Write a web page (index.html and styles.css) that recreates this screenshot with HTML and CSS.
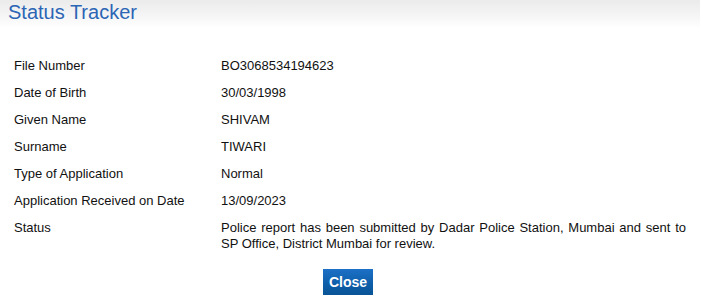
FILE: index.html
```html
<!DOCTYPE html>
<html>
<head>
<meta charset="utf-8">
<link rel="stylesheet" href="styles.css">
</head>
<body>
<div class="header"><h1 class="title">Status Tracker</h1></div>
<div class="details">
  <div class="label">File Number</div><div class="value">BO3068534194623</div>
  <div class="label">Date of Birth</div><div class="value">30/03/1998</div>
  <div class="label">Given Name</div><div class="value">SHIVAM</div>
  <div class="label">Surname</div><div class="value">TIWARI</div>
  <div class="label">Type of Application</div><div class="value">Normal</div>
  <div class="label">Application Received on Date</div><div class="value">13/09/2023</div>
  <div class="label">Status</div><div class="value status">Police report has been submitted by Dadar Police Station, Mumbai and sent to SP Office, District Mumbai for review.</div>
</div>
<div class="actions"><button class="close-btn">Close</button></div>
</body>
</html>
```
FILE: styles.css
```css
html, body {
  margin: 0;
  padding: 0;
  background: #fff;
  font-family: "Liberation Sans", Arial, sans-serif;
}
.header {
  width: 700px;
  height: 28px;
  background: linear-gradient(to bottom, #ebebeb 0%, #f6f6f6 60%, #ffffff 100%);
}
.title {
  margin: 0;
  padding: 0 0 0 8px;
  font-size: 20px;
  font-weight: normal;
  line-height: 25px;
  color: #2c65b5;
}
.details {
  display: grid;
  grid-template-columns: 207px 465px;
  margin: 24px 0 0 14px;
  font-size: 13px;
  line-height: 15px;
  color: #111;
}
.label, .value {
  padding: 6px 0;
}
.status {
  text-align: justify;
  line-height: 16px;
}
.actions {
  display: flex;
  justify-content: center;
  width: 696px;
  margin-top: 11px;
}
.close-btn {
  width: 50px;
  height: 26px;
  border: none;
  padding: 0;
  font-family: "Liberation Sans", Arial, sans-serif;
  font-size: 14px;
  font-weight: bold;
  color: #fff;
  background: linear-gradient(to bottom, #1c70c6 0%, #0d5ea8 60%, #0a5496 100%);
  cursor: pointer;
}
```
